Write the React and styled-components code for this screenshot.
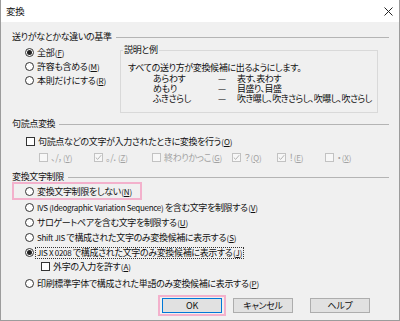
import React from "react";
import styled, { createGlobalStyle, css } from "styled-components";

const Global = createGlobalStyle`
  html, body { margin: 0; padding: 0; background: #ffffff; }
  * { box-sizing: border-box; }
`;

const Window = styled.div`
  width: 400px;
  height: 321px;
  display: flex;
  flex-direction: column;
  border-left: 1px solid #9c9c9c;
  border-right: 1px solid #9c9c9c;
  border-bottom: 1px solid #9c9c9c;
  font-family: "Noto Sans CJK JP", "Noto Sans", sans-serif;
  font-feature-settings: "palt";
  font-size: 9px;
  letter-spacing: -0.35px;
  color: #111;
  white-space: nowrap;
  overflow: hidden;
`;

const TitleBar = styled.div`
  height: 22px;
  flex: none;
  background: #fff;
  display: flex;
  align-items: center;
  justify-content: space-between;
  padding: 0 6px 0 5px;
  font-size: 9.5px;
`;

const Body = styled.div`
  flex: 1;
  background: #f0f0f0;
  padding: 10px 10px 0 11px;
  display: flex;
  flex-direction: column;
`;

const GroupHeader = styled.div`
  height: 10px;
  line-height: 10px;
  display: flex;
  align-items: center;
  gap: 4px;
  margin-top: ${(p) => p.$mt || 0}px;
  &::after {
    content: "";
    flex: 1;
    height: 1px;
    background: #b4b4b4;
  }
`;

const Row = styled.div`
  display: flex;
  align-items: ${(p) => p.$align || "flex-start"};
  margin-top: ${(p) => p.$mt || 0}px;
`;

const Column = styled.div`
  display: flex;
  flex-direction: column;
  width: ${(p) => (p.$w ? `${p.$w}px` : "auto")};
  padding-left: ${(p) => p.$pl || 0}px;
  margin-top: ${(p) => p.$mt || 0}px;
`;

const Option = styled.div`
  display: flex;
  align-items: center;
  gap: ${(p) => (p.$gap != null ? p.$gap : 3)}px;
  height: ${(p) => p.$h || 14}px;
  padding-left: ${(p) => p.$pl || 0}px;
  margin-top: ${(p) => p.$mt || 0}px;
  width: ${(p) => (p.$w ? `${p.$w}px` : "auto")};
  color: ${(p) => (p.$disabled ? "#a2a2a2" : "#111")};
  flex: none;
`;

const Lat = styled.span`
  font-size: 8px;
  letter-spacing: -0.3px;
`;

const KeyWrap = styled.span`
  font-size: 8px;
  letter-spacing: -0.15px;
  margin-left: 0.5px;
`;

const Key = ({ k }) => (
  <KeyWrap>
    (<u>{k}</u>)
  </KeyWrap>
);

const RadioCircle = styled.span`
  width: 9px;
  height: 9px;
  border-radius: 50%;
  border: 1px solid #333;
  background: #fff;
  flex: none;
  display: flex;
  align-items: center;
  justify-content: center;
  ${(p) =>
    p.$checked &&
    css`
      &::after {
        content: "";
        width: 5px;
        height: 5px;
        border-radius: 50%;
        background: #222;
      }
    `}
`;

const CheckBox = styled.span`
  width: 9px;
  height: 9px;
  border: 1px solid ${(p) => (p.$disabled ? "#c2c2c2" : "#333")};
  background: ${(p) => (p.$disabled ? "#f7f7f7" : "#fff")};
  flex: none;
  display: flex;
  align-items: center;
  justify-content: center;
`;

const Focus = styled.span`
  outline: 1px dotted #333;
  padding: 0 1px;
  line-height: 10px;
`;

const Highlight = styled.div`
  display: flex;
  align-self: flex-start;
  border: 2px solid #f3b1cc;
  padding: 0 8px 0 11px;
  height: 18px;
  align-items: center;
`;

const Fieldset = styled.fieldset`
  margin: 0;
  width: 258px;
  height: 68px;
  border: 1px solid #d9d9d9;
  padding: 0 0 0 2px;
  min-width: 0;
`;

const Legend = styled.legend`
  padding: 0 1px;
  line-height: 10px;
  font-size: 9px;
`;

const Desc = styled.div`
  padding: 7px 0 0 5px;
  line-height: 11px;
`;

const ExampleGrid = styled.div`
  display: grid;
  grid-template-columns: 65px 19px auto;
  grid-auto-rows: 10px;
  line-height: 10px;
  padding-left: 30px;
  margin-top: 1px;
`;

const Dash = styled.span`
  color: #222;
`;

const Value = styled.span`
  letter-spacing: -0.55px;
`;

const ButtonRow = styled.div`
  display: flex;
  align-items: center;
  justify-content: flex-end;
  padding-right: 19px;
  margin-top: 4px;
`;

const FocusRing = styled.div`
  border: 2px solid #f3b1cc;
  padding: 1px 2px;
  display: flex;
`;

const Button = styled.button`
  width: 60px;
  height: 15px;
  padding: 0;
  margin-left: ${(p) => p.$ml || 0}px;
  font-family: inherit;
  font-feature-settings: "palt";
  font-size: 9px;
  letter-spacing: -0.3px;
  color: #111;
  background: #e1e1e1;
  border: 1px solid ${(p) => (p.$primary ? "#0078d7" : "#adadad")};
  line-height: 13px;
`;

const Check = ({ color = "#333" }) => (
  <svg width="7" height="7" viewBox="0 0 7 7">
    <path d="M0.8 3.6 L2.7 5.4 L6.2 1.2" fill="none" stroke={color} strokeWidth="1" />
  </svg>
);

const Close = () => (
  <svg width="9" height="9" viewBox="0 0 9 9">
    <path d="M0.5 0.5 L8.5 8.5 M8.5 0.5 L0.5 8.5" stroke="#222" strokeWidth="1" />
  </svg>
);

const Radio = ({ checked, children, ...rest }) => (
  <Option {...rest}>
    <RadioCircle $checked={checked} />
    <span>{children}</span>
  </Option>
);

const CheckOpt = ({ checked, disabled, children, ...rest }) => (
  <Option $disabled={disabled} {...rest}>
    <CheckBox $disabled={disabled}>{checked && <Check color={disabled ? "#b4b4b4" : "#333"} />}</CheckBox>
    <span>{children}</span>
  </Option>
);

const punct = [
  { label: "、/，", key: "Y", w: 55, checked: false },
  { label: "。/．", key: "Z", w: 58, checked: true },
  { label: "終わりかっこ", key: "G", w: 80, checked: false },
  { label: "？", key: "Q", w: 45, checked: true },
  { label: "！", key: "E", w: 48, checked: true },
  { label: "・", key: "X", w: 0, checked: false },
];

const examples = [
  ["あらわす", "表す、表わす"],
  ["めもり", "目盛り、目盛"],
  ["ふきさらし", "吹き曝し、吹きさらし、吹曝し、吹さらし"],
];

export default function App() {
  return (
    <>
      <Global />
      <Window>
        <TitleBar>
          <span>変換</span>
          <Close />
        </TitleBar>
        <Body>
          <GroupHeader>送りがなとかな違いの基準</GroupHeader>
          <Row $mt={3}>
            <Column $w={108} $pl={13}>
              <Radio checked>全部<Key k="F" /></Radio>
              <Radio>許容も含める<Key k="M" /></Radio>
              <Radio>本則だけにする<Key k="R" /></Radio>
            </Column>
            <Fieldset>
              <Legend>説明と例</Legend>
              <Desc>すべての送り方が変換候補に出るようにします。</Desc>
              <ExampleGrid>
                {examples.map(([a, b]) => (
                  <React.Fragment key={a}>
                    <span>{a}</span>
                    <Dash>—</Dash>
                    <Value>{b}</Value>
                  </React.Fragment>
                ))}
              </ExampleGrid>
            </Fieldset>
          </Row>

          <GroupHeader $mt={6}>句読点変換</GroupHeader>
          <CheckOpt $mt={6} $h={12} $pl={14}>
            句読点などの文字が入力されたときに変換を行う<Key k="O" />
          </CheckOpt>
          <Row $mt={4} $align="center">
            <Column $pl={27} />
            {punct.map((p) => (
              <CheckOpt key={p.key} disabled checked={p.checked} $h={12} $w={p.w || undefined}>
                {p.label}
                <Key k={p.key} />
              </CheckOpt>
            ))}
          </Row>

          <GroupHeader $mt={9}>変換文字制限</GroupHeader>
          <Highlight>
            <Radio>変換文字制限をしない<Key k="N" /></Radio>
          </Highlight>
          <Column $pl={13}>
            <Radio $h={15}>
              <Lat>IVS (Ideographic Variation Sequence) </Lat>を含む文字を制限する<Key k="V" />
            </Radio>
            <Radio $h={15}>サロゲートペアを含む文字を制限する<Key k="U" /></Radio>
            <Radio $h={15}>
              <Lat>Shift JIS </Lat>で構成された文字のみ変換候補に表示する<Key k="S" />
            </Radio>
            <Option $h={15} $gap={2}>
              <RadioCircle $checked />
              <Focus>
                <Lat>JIS X 0208 </Lat>で構成された文字のみ変換候補に表示する<Key k="J" />
              </Focus>
            </Option>
            <CheckOpt $h={13} $pl={16}>外字の入力を許す<Key k="A" /></CheckOpt>
            <Radio $h={15} $mt={3}>印刷標準字体で構成された単語のみ変換候補に表示する<Key k="P" /></Radio>
          </Column>

          <ButtonRow>
            <FocusRing>
              <Button $primary>OK</Button>
            </FocusRing>
            <Button $ml={7}>キャンセル</Button>
            <Button $ml={17}>ヘルプ</Button>
          </ButtonRow>
        </Body>
      </Window>
    </>
  );
}
